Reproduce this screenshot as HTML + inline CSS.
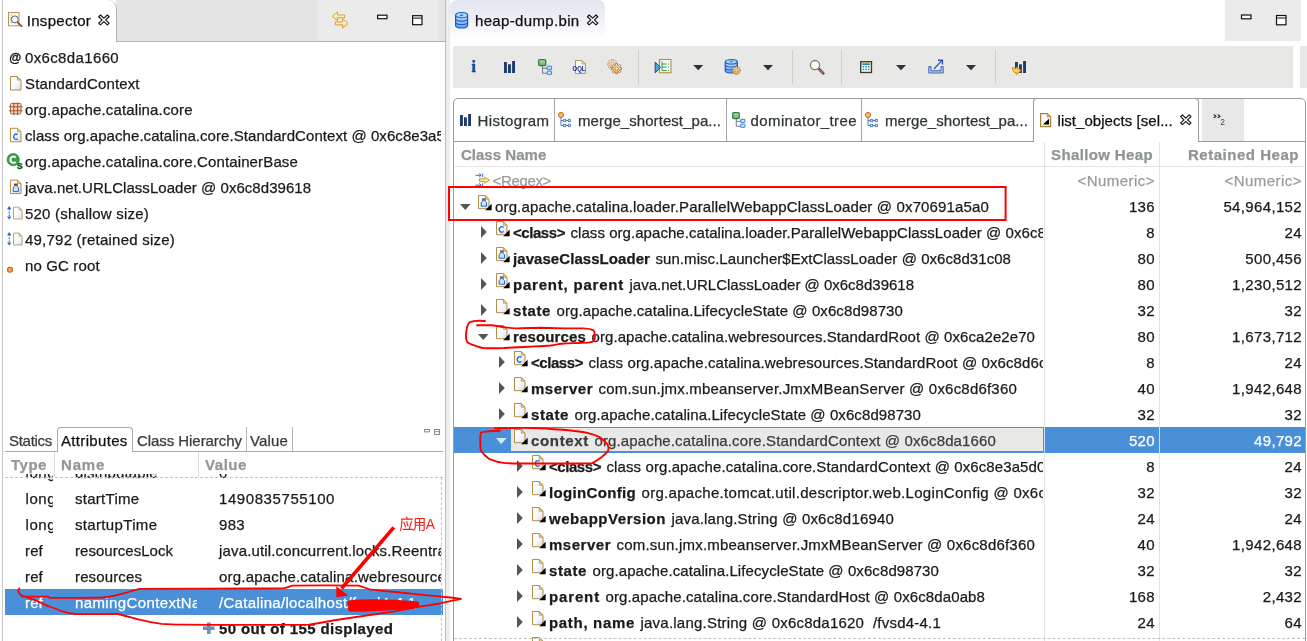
<!DOCTYPE html>
<html><head><meta charset="utf-8">
<style>
*{box-sizing:border-box;margin:0;padding:0}
html,body{width:1307px;height:641px;overflow:hidden;background:#fff}
body{font-family:"Liberation Sans",sans-serif;font-size:15px;color:#1a1a1a;position:relative}
.abs{position:absolute}
.t{position:absolute;margin-top:1px;white-space:pre;-webkit-text-stroke:.25px;line-height:26px;height:26px;letter-spacing:.14px}
.b{font-weight:700}
.g{color:#929696}
.num{position:absolute;margin-top:1px;white-space:pre;-webkit-text-stroke:.25px;line-height:26px;height:26px;text-align:right;letter-spacing:.35px}
svg{position:absolute;overflow:visible}
#left,#right,body>svg{will-change:transform}
</style></head><body>
<svg width="0" height="0" style="position:absolute"><defs>
<linearGradient id="pg" x1="0" y1="0" x2="1" y2="1"><stop offset="0" stop-color="#fff"/><stop offset=".55" stop-color="#f6f9fd"/><stop offset="1" stop-color="#cfdcf0"/></linearGradient>
<symbol id="pgbase" viewBox="0 0 16 16" overflow="visible"><path d="M.5.5H7.3L11,4.2V13.7H.5Z" fill="url(#pg)" stroke="#b08f45"/><path d="M7.3,.8V4.2H10.7Z" fill="#f1dfae" stroke="#b08f45" stroke-width=".8"/></symbol>
<symbol id="i-obj" viewBox="0 0 16 16" overflow="visible"><use href="#pgbase"/><path d="M13.6,8.8V15.2H7.2Z" fill="#000"/></symbol>
<symbol id="i-cls" viewBox="0 0 16 16" overflow="visible"><use href="#pgbase"/><path d="M7.6,6.5A2.5,2.8 0 1 0 7.6,10.4" stroke="#2468c0" stroke-width="1.3" fill="none"/><path d="M13.6,8.8V15.2H7.2Z" fill="#000"/></symbol>
<symbol id="i-cl" viewBox="0 0 16 16" overflow="visible"><use href="#pgbase"/><rect x="3.9" y="3.4" width="3.8" height="1.4" fill="#9c3a1c"/><path d="M4.4,5.3H7.2V6.4L8.5,7.6V11.2H3.1V7.6L4.4,6.4Z" fill="#cfe3fa" stroke="#2468c0" stroke-width="1"/><path d="M13.6,8.8V15.2H7.2Z" fill="#000"/></symbol>
</defs></svg>

<!-- ================= LEFT PANEL ================= -->
<div id="left" class="abs" style="left:0;top:0;width:450px;height:641px;background:#fff">
  <!-- outer gutter -->
  <div class="abs" style="left:0;top:0;width:3px;height:641px;background:#fff;border-right:1px solid #c6c6c6"></div>
  <!-- tab bar -->
  <div class="abs" style="left:116px;top:0;width:202px;height:41px;background:#e5e5e5"></div>
  <div class="abs" style="left:318px;top:0;width:127px;height:41px;background:#ebebeb"></div>
  <div class="abs" style="left:438px;top:0;width:7px;height:41px;background:#e4e4e4"></div>
  <div class="abs" style="left:116px;top:41px;width:329px;height:1px;background:#b4b4b4"></div>
  <div class="abs" style="left:3px;top:0;width:114px;height:42px;background:#fff;border-right:1px solid #b4b4b4;border-top-right-radius:9px"></div>
  <div class="t" id="insp" style="left:26.7px;top:7px;letter-spacing:.31px;color:#111">Inspector</div>

  <!-- inspector rows -->
  <div class="abs" style="left:4px;top:42px;width:437px;height:380px;overflow:hidden">
    <div class="t" id="l0" style="left:21px;top:2px;letter-spacing:.36px">0x6c8da1660</div>
    <div class="t" id="l1" style="left:21px;top:28px">StandardContext</div>
    <div class="t" id="l2" style="left:21px;top:54px">org.apache.catalina.core</div>
    <div class="t" id="l3" style="left:21px;top:80px;letter-spacing:.062px">class org.apache.catalina.core.StandardContext @ 0x6c8e3a5d0</div>
    <div class="t" id="l4" style="left:21px;top:106px">org.apache.catalina.core.ContainerBase</div>
    <div class="t" id="l5" style="left:21px;top:132px;letter-spacing:.04px">java.net.URLClassLoader @ 0x6c8d39618</div>
    <div class="t" id="l6" style="left:21px;top:158px;letter-spacing:.22px">520 (shallow size)</div>
    <div class="t" id="l7" style="left:21px;top:184px;letter-spacing:.22px">49,792 (retained size)</div>
    <div class="t" id="l8" style="left:21px;top:210px">no GC root</div>
  </div>
  <!-- bottom tabs -->
  <div class="abs" style="left:5px;top:451px;width:438px;height:1px;background:#a9a9a9"></div>
  <div class="abs" style="left:57px;top:427px;width:76px;height:25px;background:#fff;border:1px solid #a9a9a9;border-bottom:none;border-radius:4px 4px 0 0"></div>
  <div class="abs" style="left:246px;top:427px;width:1px;height:24px;background:#b5b5b5"></div>
  <div class="abs" style="left:292px;top:427px;width:1px;height:24px;background:#b5b5b5"></div>
  <div class="t" id="bt0" style="left:9px;top:427px;color:#3a3a3a;letter-spacing:-.29px">Statics</div>
  <div class="t" id="bt1" style="left:61px;top:427px;color:#111;letter-spacing:.33px">Attributes</div>
  <div class="t" id="bt2" style="left:137px;top:427px;color:#3a3a3a;letter-spacing:-.06px">Class Hierarchy</div>
  <div class="t" id="bt3" style="left:250px;top:427px;color:#3a3a3a">Value</div>
  <!-- table header -->
  <div class="abs" style="left:54px;top:452px;width:1px;height:25px;background:#dcdcdc"></div>
  <div class="abs" style="left:198px;top:452px;width:1px;height:25px;background:#dcdcdc"></div>
  <div class="t b g" id="th0" style="left:11px;top:451px;letter-spacing:.5px">Type</div>
  <div class="t b g" id="th1" style="left:61px;top:451px;letter-spacing:.8px">Name</div>
  <div class="t b g" id="th2" style="left:205px;top:451px;letter-spacing:.56px">Value</div>
  <!-- table body -->
  <div class="abs" style="left:5px;top:474px;width:438px;height:167px;overflow:hidden">
    <div class="abs" style="left:0;top:115px;width:438px;height:26px;background:#4a90d9"></div>
    <div class="abs" style="left:0;top:-15px;width:47.5px;height:26px;overflow:hidden"><div class="t" style="left:20.5px;top:0;letter-spacing:.55px">long</div></div>
    <div class="abs" style="left:50px;top:-15px;width:142px;height:26px;overflow:hidden"><div class="t" id="n0" style="left:20px;top:0">distributable</div></div>
    <div class="abs" style="left:194px;top:-15px;width:242px;height:26px;overflow:hidden"><div class="t" id="v0" style="left:20px;top:0">0</div></div>
    <div class="abs" style="left:0;top:11px;width:47.5px;height:26px;overflow:hidden"><div class="t" style="left:20.5px;top:0;letter-spacing:.55px">long</div></div>
    <div class="abs" style="left:50px;top:11px;width:142px;height:26px;overflow:hidden"><div class="t" id="n1" style="left:20px;top:0;letter-spacing:.28px">startTime</div></div>
    <div class="abs" style="left:194px;top:11px;width:242px;height:26px;overflow:hidden"><div class="t" id="v1" style="left:20px;top:0;letter-spacing:.58px">1490835755100</div></div>
    <div class="abs" style="left:0;top:37px;width:47.5px;height:26px;overflow:hidden"><div class="t" style="left:20.5px;top:0;letter-spacing:.55px">long</div></div>
    <div class="abs" style="left:50px;top:37px;width:142px;height:26px;overflow:hidden"><div class="t" id="n2" style="left:20px;top:0;letter-spacing:.34px">startupTime</div></div>
    <div class="abs" style="left:194px;top:37px;width:242px;height:26px;overflow:hidden"><div class="t" id="v2" style="left:20px;top:0;letter-spacing:.3px">983</div></div>
    <div class="abs" style="left:0;top:63px;width:48px;height:26px;overflow:hidden"><div class="t" style="left:20px;top:0">ref</div></div>
    <div class="abs" style="left:50px;top:63px;width:142px;height:26px;overflow:hidden"><div class="t" id="n3" style="left:20px;top:0;letter-spacing:.04px">resourcesLock</div></div>
    <div class="abs" style="left:194px;top:63px;width:242px;height:26px;overflow:hidden"><div class="t" id="v3" style="left:20px;top:0;letter-spacing:.153px">java.util.concurrent.locks.ReentrantLock</div></div>
    <div class="abs" style="left:0;top:89px;width:48px;height:26px;overflow:hidden"><div class="t" style="left:20px;top:0">ref</div></div>
    <div class="abs" style="left:50px;top:89px;width:142px;height:26px;overflow:hidden"><div class="t" id="n4" style="left:20px;top:0">resources</div></div>
    <div class="abs" style="left:194px;top:89px;width:242px;height:26px;overflow:hidden"><div class="t" id="v4" style="left:20px;top:0;letter-spacing:.195px">org.apache.catalina.webresources.StandardRoot</div></div>
    <div class="abs" style="left:0;top:115px;width:48px;height:26px;overflow:hidden"><div class="t" style="left:20px;top:0;color:#fff">ref</div></div>
    <div class="abs" style="left:50px;top:115px;width:142px;height:26px;overflow:hidden"><div class="t" id="n5" style="left:20px;top:0;color:#fff;letter-spacing:.38px">namingContextName</div></div>
    <div class="abs" style="left:194px;top:115px;width:242px;height:26px;overflow:hidden"><div class="t" id="v5" style="left:20px;top:0;color:#fff;letter-spacing:.31px">/Catalina/localhost/fvsd4-4.1</div></div>
    <div class="t b" id="disp" style="left:214px;top:141px;letter-spacing:.4px">50 out of 155 displayed</div>
  </div>
  <div class="abs" style="left:5px;top:477px;width:438px;height:0;border-top:1px dashed #c4c4c4"></div>
  <div class="abs" style="left:441px;top:477px;width:0;height:164px;border-left:1px dashed #c4c4c4"></div>
  <!-- sash -->
  <div class="abs" style="left:445px;top:0;width:5px;height:641px;background:#ededed;border-left:1px solid #bdbdbd"></div>
</div>

<!-- ================= RIGHT PANEL ================= -->
<!--RIGHT-START-->
<div id="right" class="abs" style="left:450px;top:0;width:857px;height:641px;background:#fff">
<div class="abs" style="left:0;top:0;width:155px;height:42px;border-radius:7px 7px 0 0;background:linear-gradient(#e2e5ee 0,#eceef4 40%,#fff 92%)"></div>
<div class="t" id="hd" style="left:25px;top:7px;color:#111;letter-spacing:0.34px">heap-dump.bin</div>
<div class="abs" style="left:775px;top:0;width:76px;height:41px;background:#ebebeb"></div>
<div class="abs" style="left:3px;top:46px;width:840px;height:42px;background:#e8e8e7"></div>
<div class="abs" style="left:850px;top:46px;width:7px;height:42px;background:#e8e8e7"></div>
<div class="abs" style="left:188px;top:50px;width:1px;height:34px;background:#cfcfcf"></div>
<div class="abs" style="left:342px;top:50px;width:1px;height:34px;background:#cfcfcf"></div>
<div class="abs" style="left:391px;top:50px;width:1px;height:34px;background:#cfcfcf"></div>
<div class="abs" style="left:545px;top:50px;width:1px;height:34px;background:#cfcfcf"></div>
<div class="abs" style="left:3px;top:98px;width:853px;height:560px;border:1px solid #9c9c9c;border-radius:5px 5px 0 0"></div>
<div class="abs" style="left:4px;top:141px;width:851px;height:1px;background:#9c9c9c"></div>
<div class="abs" style="left:104px;top:99px;width:1px;height:42px;background:#a8a8a8"></div>
<div class="abs" style="left:276px;top:99px;width:1px;height:42px;background:#a8a8a8"></div>
<div class="abs" style="left:411px;top:99px;width:1px;height:42px;background:#a8a8a8"></div>
<div class="abs" style="left:752px;top:99px;width:42px;height:42px;background:#e8e8e8"></div>
<div class="abs" style="left:583px;top:98px;width:166px;height:44px;background:#fff;border:1px solid #9c9c9c;border-bottom:none;border-radius:4px 4px 0 0"></div>
<div class="t" id="tb0" style="left:27.5px;top:107px;color:#2e3436;letter-spacing:0.405px">Histogram</div>
<div class="t" id="tb1" style="left:128px;top:107px;color:#2e3436;letter-spacing:0.062px">merge_shortest_pa...</div>
<div class="t" id="tb2" style="left:300.5px;top:107px;color:#2e3436;letter-spacing:0.4px">dominator_tree</div>
<div class="t" id="tb3" style="left:435px;top:107px;color:#2e3436;letter-spacing:0.062px">merge_shortest_pa...</div>
<div class="t" id="tb4" style="left:607.5px;top:107px;color:#111;letter-spacing:0.054px">list_objects [sel...</div>
<!--TOOLBAR-ICONS--><!-- coordinates here are absolute page coords minus 450 (panel origin) -->
<svg style="left:0;top:0" width="857" height="145">
<defs>
<linearGradient id="gy" x1="0" y1="0" x2="0" y2="1"><stop offset="0" stop-color="#fff8d0"/><stop offset="1" stop-color="#efb84a"/></linearGradient>
<linearGradient id="gb" x1="0" y1="0" x2="0" y2="1"><stop offset="0" stop-color="#bfe3fb"/><stop offset="1" stop-color="#5aa6e8"/></linearGradient>
<linearGradient id="gg" x1="0" y1="0" x2="0" y2="1"><stop offset="0" stop-color="#b5dba0"/><stop offset="1" stop-color="#6fb266"/></linearGradient>
<g id="bars3"><rect x="0" y="1" width="2.9" height="11" fill="#1b3b6f"/><rect x="4" y="3.3" width="2.9" height="8.7" fill="#1b3b6f"/><rect x="8.1" y="0" width="2.9" height="12" fill="#1b3b6f"/></g>
<g id="domtree"><path d="M4.5,7V14.5H9M4.5,9.5H9" fill="none" stroke="#6b7890" stroke-width="1"/><rect x=".7" y=".7" width="7" height="6" rx="1" fill="url(#gg)" stroke="#2c7d4f" stroke-width="1.3"/><rect x="9.2" y="7.4" width="4.4" height="3.2" rx=".3" fill="#c6ebff" stroke="#3b78d0" stroke-width="1"/><rect x="9.2" y="12.4" width="4.4" height="3.2" rx=".3" fill="#c6ebff" stroke="#3b78d0" stroke-width="1"/></g>
<g id="mergetree"><path d="M3.5,5.5V13.5H6M3.5,8.5H6M8,8.5H11M8,13.5H11" fill="none" stroke="#4a78c0" stroke-width="1"/><rect x="6" y="7.3" width="2.2" height="2.4" fill="#dbe9fb" stroke="#4a78c0" stroke-width=".8"/><rect x="10.8" y="7.3" width="2.2" height="2.4" fill="#dbe9fb" stroke="#4a78c0" stroke-width=".8"/><rect x="6" y="12.3" width="2.2" height="2.4" fill="#dbe9fb" stroke="#4a78c0" stroke-width=".8"/><rect x="10.8" y="12.3" width="2.2" height="2.4" fill="#dbe9fb" stroke="#4a78c0" stroke-width=".8"/><circle cx="3.5" cy="3" r="2.6" fill="#f8b866" stroke="#c9761a" stroke-width="1"/></g>
<g id="dd"><path d="M0,0H10L5,5.2Z" fill="#2e3436"/></g>
<g id="gear"><path d="M-0.89,-5.53L0.89,-5.53L1.09,-3.53L1.72,-3.27L3.28,-4.54L4.54,-3.28L3.27,-1.73L3.53,-1.09L5.53,-0.89L5.53,0.89L3.53,1.09L3.27,1.72L4.54,3.28L3.28,4.54L1.73,3.27L1.09,3.53L0.89,5.53L-0.89,5.53L-1.09,3.53L-1.72,3.27L-3.28,4.54L-4.54,3.28L-3.27,1.73L-3.53,1.09L-5.53,0.89L-5.53,-0.89L-3.53,-1.09L-3.27,-1.72L-4.54,-3.28L-3.28,-4.54L-1.73,-3.27L-1.09,-3.53Z" fill="url(#gy)" stroke="#b8672e" stroke-width=".9" stroke-linejoin="round"/><circle r="1.9" fill="#f0ece4" stroke="#b8672e" stroke-width=".9"/></g>
<g id="dbstack"><path d="M0,3V13.5A6,2.6 0 0 0 12,13.5V3" fill="url(#gb)" stroke="#1f55d0" stroke-width="1.2"/><path d="M0,6.5A6,2.6 0 0 0 12,6.5M0,10A6,2.6 0 0 0 12,10" fill="none" stroke="#1f55d0" stroke-width="1.1"/><ellipse cx="6" cy="3" rx="6" ry="2.7" fill="#a8d8f6" stroke="#1f55d0" stroke-width="1.2"/><ellipse cx="6" cy="3" rx="1.6" ry=".6" fill="#2450a8"/></g>
<g id="closex"><path d="M0.00,1.75L1.75,0.00L5.20,3.15L8.65,0.00L10.40,1.75L6.95,4.90L10.40,8.05L8.65,9.80L5.20,6.65L1.75,9.80L0.00,8.05L3.45,4.90Z" fill="#fff" stroke="#111" stroke-width="1.15" stroke-linejoin="round"/></g>
</defs>
<!-- top tab icon + close -->
<use href="#dbstack" transform="translate(5.6,12.2) scale(1,.98)"/>
<use href="#closex" transform="translate(137.4,15)"/>
<!-- min / max -->
<rect x="791.5" y="15" width="9.5" height="3.8" fill="#fff" stroke="#111" stroke-width="1.2"/>
<rect x="826.5" y="15.5" width="9.5" height="9.3" fill="#fff" stroke="#111" stroke-width="1.2"/><path d="M827,18H836" stroke="#111" stroke-width="1"/>
<!-- toolbar -->
<text x="21.6" y="71.6" font-family="Liberation Serif" font-weight="700" font-size="16" fill="#0b4a9c" stroke="#0b4a9c" stroke-width=".45">i</text>
<use href="#bars3" transform="translate(54,61)"/>
<use href="#domtree" transform="translate(88,59) scale(1,.98)"/>
<g transform="translate(124,60)"><path d="M1.5.5H8L11.5,4V13.5H1.5Z" fill="url(#pg)" stroke="#b09a60" stroke-width="1"/><path d="M8,.8V4H11.2Z" fill="#f1dfae" stroke="#b09a60" stroke-width=".8"/><text x="-1.5" y="10.6" font-family="Liberation Sans" font-weight="700" font-size="7" fill="#1c2a7c" textLength="13" lengthAdjust="spacingAndGlyphs">OQL</text></g>
<g opacity=".6"><use href="#gear" transform="translate(162.4,64.2) scale(.9)"/></g>
<use href="#gear" transform="translate(166.5,68.6) scale(.93)"/>
<g transform="translate(205,59)"><rect x="4.5" y=".5" width="11.5" height="13.2" fill="#f4f8f6" stroke="#b08f45" stroke-width="1.1"/><path d="M7,2.5V11.5M7,5H11.5M7,8H11.5M7,11.5H11.5" stroke="#2f9a55" stroke-width="1" fill="none"/><path d="M13,5H14M13,8H14M13,11.5H14" stroke="#2f9a55" stroke-width="1"/><path d="M.2,3.2V13.8L5.6,8.5Z" fill="#4fa7c9" stroke="#123a8c" stroke-width=".9"/></g>
<use href="#dd" transform="translate(243.2,65)"/>
<use href="#dbstack" transform="translate(275.3,59.2) scale(1,.86)"/>
<use href="#gear" transform="translate(286.3,70.4) scale(.76)"/>
<use href="#dd" transform="translate(313,65)"/>
<g><path d="M369.5,69.5L373.3,73.3" stroke="#1b2d6b" stroke-width="2.6" stroke-linecap="round"/><path d="M369.7,69.7L373,73" stroke="#d0693c" stroke-width="1.6" stroke-linecap="round"/><circle cx="365" cy="65.1" r="4.6" fill="#fffce8" stroke="#7d7d7d" stroke-width="1.3"/></g>
<g transform="translate(410,61)"><rect x=".7" y=".7" width="10.8" height="10.8" fill="#efe9b4" stroke="#3c3630" stroke-width="1.3"/><rect x="2" y="2" width="8.2" height="8.2" fill="#fff"/><rect x="2.2" y="2.3" width="7.8" height="1.8" fill="#2b86b0"/><path d="M2.6,5.8H4.2M5.3,5.8H6.9M8,5.8H9.6M2.6,8.4H4.2M5.3,8.4H6.9M8,8.4H9.6" stroke="#2b86b0" stroke-width="1.5"/></g>
<use href="#dd" transform="translate(446,65)"/>
<g transform="translate(478,59)"><path d="M.8,7.5V14H15.2V7.5H13V11.8H3V7.5Z" fill="#b8c8e8" stroke="#3d66b8" stroke-width="1"/><path d="M6,10L13.5,1.8" stroke="#2b4fb0" stroke-width="1.2"/><path d="M10,1.2H14.4V5.6" fill="none" stroke="#2b4fb0" stroke-width="1.4"/></g>
<use href="#dd" transform="translate(516,65)"/>
<use href="#bars3" transform="translate(565,61)"/>
<path d="M562.3,67.5L566.2,68.8V67L571,70.5L566.2,74.6V72.6C564,72.8 562.5,71 562.3,67.5Z" fill="#f7cf58" stroke="#c98a1c" stroke-width=".9" stroke-linejoin="round"/>
<!-- inner tab icons -->
<use href="#bars3" transform="translate(10,114)"/>
<use href="#mergetree" transform="translate(107.5,112)"/>
<use href="#domtree" transform="translate(282,112) scale(.95,.98)"/>
<use href="#mergetree" transform="translate(414.5,112)"/>
<g transform="translate(590,113)"><path d="M.6.6H7.3L10.6,3.9V13.6H.6Z" fill="url(#pg)" stroke="#a88430" stroke-width="1.2"/><path d="M7.3,.9V3.9H10.3Z" fill="#efd28c" stroke="#a88430" stroke-width=".8"/><path d="M9,5.8V11.6H2.9Z" fill="#000"/></g>
<use href="#closex" transform="translate(730.6,114.9)"/>
<!-- >>2 -->
<path d="M763,114.4H764.8L766.8,116.2L764.8,118H763L765,116.2ZM767,114.4H768.8L770.8,116.2L768.8,118H767L769,116.2Z" fill="#222"/>
<text x="770.3" y="125" font-family="Liberation Sans" font-size="8.5" fill="#444">2</text>
<!-- regex icon placed in separate svg below -->
</svg>
<svg style="left:23.7px;top:172.6px" width="17" height="14" viewBox="0 0 16.2 15.2"><path d="M.5,2.5H6.5M4.5,.6L6.6,2.5L4.5,4.4M8.3,.5V4.5" stroke="#2a5fa8" stroke-width="1" fill="none"/><path d="M.5,13.2H6.5M4.5,11.3L6.6,13.2L4.5,15.1M8.3,11.2V15" stroke="#2a5fa8" stroke-width="1" fill="none"/><path d="M4.6,6.4H10.6V4.6L15.6,7.8L10.6,11V9.2H4.6Z" fill="#fff1b8" stroke="#c48a1c" stroke-width="1" stroke-linejoin="round"/></svg>
<!--/TOOLBAR-ICONS-->
<div class="abs" style="left:4px;top:166px;width:851px;height:1px;background:#e4e4e4"></div>
<div class="abs" style="left:594px;top:142px;width:1px;height:499px;background:#e2e2e2"></div>
<div class="abs" style="left:709px;top:142px;width:1px;height:499px;background:#e2e2e2"></div>
<div class="t b" id="h0" style="left:10.9px;top:141px;color:#8f9494;letter-spacing:0.034px">Class Name</div>
<div class="t b" id="h1" style="left:601px;top:141px;color:#8f9494;letter-spacing:0.372px">Shallow Heap</div>
<div class="t b" id="h2" style="left:738px;top:141px;color:#8f9494;letter-spacing:0.523px">Retained Heap</div>
<div class="t" id="rg" style="left:42.60000000000002px;top:167px;color:#9b9b9b;letter-spacing:-0.356px">&lt;Regex&gt;</div>
<div class="num" style="left:605px;width:100px;top:167px;color:#9b9b9b"><span id="nm1" style="letter-spacing:0.46px">&lt;Numeric&gt;</span></div>
<div class="num" style="left:752px;width:100px;top:167px;color:#9b9b9b"><span id="nm2" style="letter-spacing:0.46px">&lt;Numeric&gt;</span></div>
<svg style="left:10.300000000000011px;top:203.5px" width="11" height="6"><path d="M0,0H10.6L5.3,5.9Z" fill="#555"/></svg>
<svg style="left:28px;top:195px" width="16" height="16"><use href="#i-cl"/></svg>
<div class="abs" style="left:45px;top:193px;width:548px;height:26px;overflow:hidden"><div class="t" style="left:0;top:0;color:#1a1a1a"><span id="rt0" style="letter-spacing:0.145px">org.apache.catalina.loader.ParallelWebappClassLoader @ 0x70691a5a0</span></div></div>
<div class="num" style="left:605px;width:100px;top:193px;color:#1a1a1a">136</div>
<div class="num" style="left:752px;width:100px;top:193px;color:#1a1a1a">54,964,152</div>
<svg style="left:30.5px;top:226.2px" width="6" height="12"><path d="M0,0V12L5.8,6Z" fill="#555"/></svg>
<svg style="left:46px;top:221px" width="16" height="16"><use href="#i-cls"/></svg>
<div class="abs" style="left:63px;top:219px;width:530px;height:26px;overflow:hidden"><div class="t" style="left:0;top:0;color:#1a1a1a"><span class="b" id="rb1" style="letter-spacing:-0.438px">&lt;class&gt;</span><span id="rt1" style="position:absolute;left:57.5px;letter-spacing:0.053px">class org.apache.catalina.loader.ParallelWebappClassLoader @ 0x6c8e3f9a8</span></div></div>
<div class="num" style="left:605px;width:100px;top:219px;color:#1a1a1a">8</div>
<div class="num" style="left:752px;width:100px;top:219px;color:#1a1a1a">24</div>
<svg style="left:30.5px;top:252.2px" width="6" height="12"><path d="M0,0V12L5.8,6Z" fill="#555"/></svg>
<svg style="left:46px;top:247px" width="16" height="16"><use href="#i-cl"/></svg>
<div class="abs" style="left:63px;top:245px;width:530px;height:26px;overflow:hidden"><div class="t" style="left:0;top:0;color:#1a1a1a"><span class="b" id="rb2" style="letter-spacing:0.063px">javaseClassLoader</span><span id="rt2" style="position:absolute;left:142.5px;letter-spacing:0.056px">sun.misc.Launcher$ExtClassLoader @ 0x6c8d31c08</span></div></div>
<div class="num" style="left:605px;width:100px;top:245px;color:#1a1a1a">80</div>
<div class="num" style="left:752px;width:100px;top:245px;color:#1a1a1a">500,456</div>
<svg style="left:30.5px;top:278.2px" width="6" height="12"><path d="M0,0V12L5.8,6Z" fill="#555"/></svg>
<svg style="left:46px;top:273px" width="16" height="16"><use href="#i-cl"/></svg>
<div class="abs" style="left:63px;top:271px;width:530px;height:26px;overflow:hidden"><div class="t" style="left:0;top:0;color:#1a1a1a"><span class="b" id="rb3" style="letter-spacing:0.783px">parent, parent</span><span id="rt3" style="position:absolute;left:116.5px;letter-spacing:-0.002px">java.net.URLClassLoader @ 0x6c8d39618</span></div></div>
<div class="num" style="left:605px;width:100px;top:271px;color:#1a1a1a">80</div>
<div class="num" style="left:752px;width:100px;top:271px;color:#1a1a1a">1,230,512</div>
<svg style="left:30.5px;top:304.2px" width="6" height="12"><path d="M0,0V12L5.8,6Z" fill="#555"/></svg>
<svg style="left:46px;top:299px" width="16" height="16"><use href="#i-obj"/></svg>
<div class="abs" style="left:63px;top:297px;width:530px;height:26px;overflow:hidden"><div class="t" style="left:0;top:0;color:#1a1a1a"><span class="b" id="rb4" style="letter-spacing:0.594px">state</span><span id="rt4" style="position:absolute;left:43.5px;letter-spacing:0.091px">org.apache.catalina.LifecycleState @ 0x6c8d98730</span></div></div>
<div class="num" style="left:605px;width:100px;top:297px;color:#1a1a1a">32</div>
<div class="num" style="left:752px;width:100px;top:297px;color:#1a1a1a">32</div>
<svg style="left:27.80000000000001px;top:333.5px" width="11" height="6"><path d="M0,0H10.6L5.3,5.9Z" fill="#555"/></svg>
<svg style="left:46px;top:325px" width="16" height="16"><use href="#i-obj"/></svg>
<div class="abs" style="left:63px;top:323px;width:530px;height:26px;overflow:hidden"><div class="t" style="left:0;top:0;color:#1a1a1a"><span class="b" id="rb5" style="letter-spacing:0.142px">resources</span><span id="rt5" style="position:absolute;left:78.5px;letter-spacing:0.079px">org.apache.catalina.webresources.StandardRoot @ 0x6ca2e2e70</span></div></div>
<div class="num" style="left:605px;width:100px;top:323px;color:#1a1a1a">80</div>
<div class="num" style="left:752px;width:100px;top:323px;color:#1a1a1a">1,673,712</div>
<svg style="left:48.5px;top:356.2px" width="6" height="12"><path d="M0,0V12L5.8,6Z" fill="#555"/></svg>
<svg style="left:64px;top:351px" width="16" height="16"><use href="#i-cls"/></svg>
<div class="abs" style="left:81px;top:349px;width:512px;height:26px;overflow:hidden"><div class="t" style="left:0;top:0;color:#1a1a1a"><span class="b" id="rb6" style="letter-spacing:-0.438px">&lt;class&gt;</span><span id="rt6" style="position:absolute;left:57.5px;letter-spacing:0.109px">class org.apache.catalina.webresources.StandardRoot @ 0x6c8d6c0a8</span></div></div>
<div class="num" style="left:605px;width:100px;top:349px;color:#1a1a1a">8</div>
<div class="num" style="left:752px;width:100px;top:349px;color:#1a1a1a">24</div>
<svg style="left:48.5px;top:382.2px" width="6" height="12"><path d="M0,0V12L5.8,6Z" fill="#555"/></svg>
<svg style="left:64px;top:377px" width="16" height="16"><use href="#i-obj"/></svg>
<div class="abs" style="left:81px;top:375px;width:512px;height:26px;overflow:hidden"><div class="t" style="left:0;top:0;color:#1a1a1a"><span class="b" id="rb7" style="letter-spacing:0.516px">mserver</span><span id="rt7" style="position:absolute;left:67.5px;letter-spacing:0.204px">com.sun.jmx.mbeanserver.JmxMBeanServer @ 0x6c8d6f360</span></div></div>
<div class="num" style="left:605px;width:100px;top:375px;color:#1a1a1a">40</div>
<div class="num" style="left:752px;width:100px;top:375px;color:#1a1a1a">1,942,648</div>
<svg style="left:48.5px;top:408.2px" width="6" height="12"><path d="M0,0V12L5.8,6Z" fill="#555"/></svg>
<svg style="left:64px;top:403px" width="16" height="16"><use href="#i-obj"/></svg>
<div class="abs" style="left:81px;top:401px;width:512px;height:26px;overflow:hidden"><div class="t" style="left:0;top:0;color:#1a1a1a"><span class="b" id="rb8" style="letter-spacing:0.594px">state</span><span id="rt8" style="position:absolute;left:43.5px;letter-spacing:0.091px">org.apache.catalina.LifecycleState @ 0x6c8d98730</span></div></div>
<div class="num" style="left:605px;width:100px;top:401px;color:#1a1a1a">32</div>
<div class="num" style="left:752px;width:100px;top:401px;color:#1a1a1a">32</div>
<div class="abs" style="left:4px;top:427px;width:851px;height:26px;background:#4a90d9"></div>
<div class="abs" style="left:60px;top:427px;width:534px;height:26px;background:#e8e8e7;border:1px solid #4a90d9;border-bottom-width:2px"></div>
<div class="abs" style="left:594px;top:427px;width:1px;height:26px;background:#cfe0f4"></div>
<div class="abs" style="left:709px;top:427px;width:1px;height:26px;background:#cfe0f4"></div>
<svg style="left:45.80000000000001px;top:437.5px" width="11" height="6"><path d="M0,0H10.6L5.3,5.9Z" fill="#d6e6f8"/></svg>
<svg style="left:64px;top:429px" width="16" height="16"><use href="#i-obj"/></svg>
<div class="abs" style="left:81px;top:427px;width:512px;height:26px;overflow:hidden"><div class="t" style="left:0;top:0;color:#3c3c3c"><span class="b" id="rb9" style="letter-spacing:0.665px">context</span><span id="rt9" style="position:absolute;left:63.5px;letter-spacing:0.126px">org.apache.catalina.core.StandardContext @ 0x6c8da1660</span></div></div>
<div class="num" style="left:605px;width:100px;top:427px;color:#fff">520</div>
<div class="num" style="left:752px;width:100px;top:427px;color:#fff">49,792</div>
<svg style="left:66.5px;top:460.2px" width="6" height="12"><path d="M0,0V12L5.8,6Z" fill="#555"/></svg>
<svg style="left:82px;top:455px" width="16" height="16"><use href="#i-cls"/></svg>
<div class="abs" style="left:99px;top:453px;width:494px;height:26px;overflow:hidden"><div class="t" style="left:0;top:0;color:#1a1a1a"><span class="b" id="rb10" style="letter-spacing:-0.438px">&lt;class&gt;</span><span id="rt10" style="position:absolute;left:57.5px;letter-spacing:0.099px">class org.apache.catalina.core.StandardContext @ 0x6c8e3a5d0</span></div></div>
<div class="num" style="left:605px;width:100px;top:453px;color:#1a1a1a">8</div>
<div class="num" style="left:752px;width:100px;top:453px;color:#1a1a1a">24</div>
<svg style="left:66.5px;top:486.2px" width="6" height="12"><path d="M0,0V12L5.8,6Z" fill="#555"/></svg>
<svg style="left:82px;top:481px" width="16" height="16"><use href="#i-obj"/></svg>
<div class="abs" style="left:99px;top:479px;width:494px;height:26px;overflow:hidden"><div class="t" style="left:0;top:0;color:#1a1a1a"><span class="b" id="rb11" style="letter-spacing:0.335px">loginConfig</span><span id="rt11" style="position:absolute;left:92.5px;letter-spacing:0.301px">org.apache.tomcat.util.descriptor.web.LoginConfig @ 0x6c8da2d18</span></div></div>
<div class="num" style="left:605px;width:100px;top:479px;color:#1a1a1a">32</div>
<div class="num" style="left:752px;width:100px;top:479px;color:#1a1a1a">32</div>
<svg style="left:66.5px;top:512.2px" width="6" height="12"><path d="M0,0V12L5.8,6Z" fill="#555"/></svg>
<svg style="left:82px;top:507px" width="16" height="16"><use href="#i-obj"/></svg>
<div class="abs" style="left:99px;top:505px;width:494px;height:26px;overflow:hidden"><div class="t" style="left:0;top:0;color:#1a1a1a"><span class="b" id="rb12" style="letter-spacing:0.535px">webappVersion</span><span id="rt12" style="position:absolute;left:122.5px;letter-spacing:0.182px">java.lang.String @ 0x6c8d16940</span></div></div>
<div class="num" style="left:605px;width:100px;top:505px;color:#1a1a1a">24</div>
<div class="num" style="left:752px;width:100px;top:505px;color:#1a1a1a">24</div>
<svg style="left:66.5px;top:538.2px" width="6" height="12"><path d="M0,0V12L5.8,6Z" fill="#555"/></svg>
<svg style="left:82px;top:533px" width="16" height="16"><use href="#i-obj"/></svg>
<div class="abs" style="left:99px;top:531px;width:494px;height:26px;overflow:hidden"><div class="t" style="left:0;top:0;color:#1a1a1a"><span class="b" id="rb13" style="letter-spacing:0.516px">mserver</span><span id="rt13" style="position:absolute;left:67.5px;letter-spacing:0.204px">com.sun.jmx.mbeanserver.JmxMBeanServer @ 0x6c8d6f360</span></div></div>
<div class="num" style="left:605px;width:100px;top:531px;color:#1a1a1a">40</div>
<div class="num" style="left:752px;width:100px;top:531px;color:#1a1a1a">1,942,648</div>
<svg style="left:66.5px;top:564.2px" width="6" height="12"><path d="M0,0V12L5.8,6Z" fill="#555"/></svg>
<svg style="left:82px;top:559px" width="16" height="16"><use href="#i-obj"/></svg>
<div class="abs" style="left:99px;top:557px;width:494px;height:26px;overflow:hidden"><div class="t" style="left:0;top:0;color:#1a1a1a"><span class="b" id="rb14" style="letter-spacing:0.594px">state</span><span id="rt14" style="position:absolute;left:43.5px;letter-spacing:0.091px">org.apache.catalina.LifecycleState @ 0x6c8d98730</span></div></div>
<div class="num" style="left:605px;width:100px;top:557px;color:#1a1a1a">32</div>
<div class="num" style="left:752px;width:100px;top:557px;color:#1a1a1a">32</div>
<svg style="left:66.5px;top:590.2px" width="6" height="12"><path d="M0,0V12L5.8,6Z" fill="#555"/></svg>
<svg style="left:82px;top:585px" width="16" height="16"><use href="#i-obj"/></svg>
<div class="abs" style="left:99px;top:583px;width:494px;height:26px;overflow:hidden"><div class="t" style="left:0;top:0;color:#1a1a1a"><span class="b" id="rb15" style="letter-spacing:0.859px">parent</span><span id="rt15" style="position:absolute;left:56.5px;letter-spacing:0.112px">org.apache.catalina.core.StandardHost @ 0x6c8da0ab8</span></div></div>
<div class="num" style="left:605px;width:100px;top:583px;color:#1a1a1a">168</div>
<div class="num" style="left:752px;width:100px;top:583px;color:#1a1a1a">2,432</div>
<svg style="left:66.5px;top:616.2px" width="6" height="12"><path d="M0,0V12L5.8,6Z" fill="#555"/></svg>
<svg style="left:82px;top:611px" width="16" height="16"><use href="#i-obj"/></svg>
<div class="abs" style="left:99px;top:609px;width:494px;height:26px;overflow:hidden"><div class="t" style="left:0;top:0;color:#1a1a1a"><span class="b" id="rb16" style="letter-spacing:0.681px">path, name</span><span id="rt16" style="position:absolute;left:91.5px;letter-spacing:0.22px">java.lang.String @ 0x6c8da1620  /fvsd4-4.1</span></div></div>
<div class="num" style="left:605px;width:100px;top:609px;color:#1a1a1a">24</div>
<div class="num" style="left:752px;width:100px;top:609px;color:#1a1a1a">64</div>
<svg style="left:66.5px;top:642.2px" width="6" height="12"><path d="M0,0V12L5.8,6Z" fill="#555"/></svg>
<svg style="left:82px;top:637px" width="16" height="16"><use href="#i-obj"/></svg>
<div class="abs" style="left:4px;top:638px;width:851px;height:0;border-top:1px dashed #c2c2c2"></div>
<!--RIGHT-EXTRA-->
</div>
<!--RIGHT-END-->

<!--OVERLAY-->
<svg style="left:0;top:0;z-index:50;pointer-events:none" width="1307" height="641">
<defs>
<linearGradient id="gy2" x1="0" y1="0" x2="0" y2="1"><stop offset="0" stop-color="#fffdf0"/><stop offset="1" stop-color="#f8dc8a"/></linearGradient>
<g id="pg11"><path d="M.5.5H7.5L11,4V14H.5Z" fill="url(#pg)" stroke="#b08f45"/><path d="M7.5,.8V4H10.7Z" fill="#f1dfae" stroke="#b08f45" stroke-width=".8"/></g>
<g id="szic"><path d="M2.2,3V11.4" stroke="#2a66c8" stroke-width="1.1" stroke-dasharray="1.7 1.2"/><path d="M0,3.6L2.2,.4L4.4,3.6ZM0,10.8L2.2,14L4.4,10.8Z" fill="#2a66c8"/><path d="M6.5,1.5H12L15.2,4.6V13.4H6.5Z" fill="url(#pg)" stroke="#bba676" stroke-width="1"/><path d="M12,1.8V4.6H14.9Z" fill="#f1dfae" stroke="#bba676" stroke-width=".7"/></g>
</defs>
<!-- Inspector tab icon -->
<g transform="translate(8,12)"><rect x=".5" y=".5" width="10.5" height="13.3" fill="#fbfbf4" stroke="#b89a4c"/><path d="M2,3H5M2,5.5H4M2,8H3.5M2,10.5H4" stroke="#b9c8e6" stroke-width="1"/><path d="M9.6,10.4L13.6,14.4" stroke="#8a4a34" stroke-width="1.7" stroke-linecap="round"/><circle cx="6.8" cy="7.4" r="3.5" fill="#eef4fb" fill-opacity=".9" stroke="#5a6270" stroke-width="1"/></g>
<use href="#closex" transform="translate(98.7,15)"/>
<!-- sync arrows -->
<path d="M332.2,16.4L337.4,12.1V15H344.7V17.8H337.4V20.7Z" fill="url(#gy2)" stroke="#cf9526" stroke-width=".9" stroke-linejoin="round"/>
<path d="M348,23.4L342.6,18.9V22H335.2V24.9H342.6V28Z" fill="url(#gy2)" stroke="#cf9526" stroke-width=".9" stroke-linejoin="round"/>
<rect x="377.6" y="15.2" width="9.4" height="3.5" fill="#fff" stroke="#111" stroke-width="1.2"/>
<rect x="412.6" y="15.7" width="9.4" height="9" fill="#fff" stroke="#111" stroke-width="1.2"/><path d="M413,18.1H422" stroke="#111" stroke-width="1"/>
<!-- rows -->
<text x="9.2" y="61.6" font-family="Liberation Sans" font-weight="700" font-size="12.3" fill="#111" stroke="#111" stroke-width=".3">@</text>
<use href="#pg11" transform="translate(10,76)"/>
<g transform="translate(9,102.4)"><rect x="1.5" y="1" width="10.5" height="10.5" rx="1" fill="#f6d9b8" stroke="#b0603a" stroke-width="1"/><path d="M0,4.3H13.5M0,8.3H13.5M4.9,0V12.6M8.6,0V12.6" stroke="#a8552f" stroke-width="1.1" fill="none"/></g>
<g transform="translate(10,127.8)"><use href="#pg11"/><path d="M7.6,6.9A2.3,2.7 0 1 0 7.6,10.9" stroke="#2468c0" stroke-width="1.3" fill="none"/></g>
<g><circle cx="13.2" cy="159.6" r="6.1" fill="#36a046" stroke="#2a8a3a" stroke-width=".8"/><path d="M15.8,157.5A3.1,3.2 0 1 0 15.8,161.8" stroke="#fff" stroke-width="2" fill="none"/><text x="16.8" y="168.6" font-family="Liberation Sans" font-weight="700" font-size="11" fill="#0a5a18" stroke="#0a5a18" stroke-width=".3">s</text></g>
<g transform="translate(10,179.6)"><use href="#pg11"/><rect x="4" y="4" width="3.8" height="1.4" fill="#9c3a1c"/><path d="M4.5,5.9H7.3V7L8.6,8.2V12H3.2V8.2L4.5,7Z" fill="#cfe3fa" stroke="#2468c0" stroke-width="1"/></g>
<use href="#szic" transform="translate(7,205.6)"/>
<use href="#szic" transform="translate(7,231.6)"/>
<circle cx="10" cy="269.7" r="2.5" fill="#f6a648" stroke="#c46a12" stroke-width="1.1"/>
<!-- mini min/max -->
<rect x="424.5" y="429.5" width="5" height="2.4" fill="none" stroke="#8e8e88" stroke-width="1"/>
<rect x="434.5" y="429.5" width="5" height="5" fill="none" stroke="#8e8e88" stroke-width="1"/><path d="M434.5,431.7H439.5" stroke="#8e8e88" stroke-width="1"/>
<!-- plus icon -->
<path d="M207,622.4H210.6V626.4H214.6V630H210.6V634H207V630H203V626.4H207Z" fill="#6f8fb3"/>

<!-- ===== red annotations ===== -->
<g fill="none" stroke="#ff0000" stroke-linecap="round" stroke-linejoin="round">
<rect x="449" y="187" width="556.6" height="33" stroke-width="2" stroke-linejoin="miter"/>
<path d="M485,321C480,320.6 473,320.8 469.7,322.2C466.8,324 466.4,330 466,334.5C465.9,338 466.2,340.5 467.2,341.8C469,343.6 472,344.6 474.6,345.5C478,346.8 480.5,347.8 483.2,348C490,348.3 497,348.2 504,348C512,347.6 520,347.2 528.4,346.7C536,346.3 543,346 550.5,345.5C555,345 558,344.2 561.5,343.7C567,343.2 572,343.2 577.4,343C582,342.9 586,342.8 589.6,342.4C592,342 593.4,341.6 593.9,340.6C594.8,338.6 595,336.5 594.8,334.5C594.6,332.6 594.3,331 593.3,330.2C590.5,329 587,328.6 583.5,328.4C577,328.3 571,328.4 565.2,328.4C557,328.3 549,327.9 540.7,327.7C532.5,327.7 524,328.5 516.2,328.4C512,328.2 508,327.7 504,327.1C500,326.5 496,325.6 491.7,325.3C486.5,325.1 482,325.3 477,325.3" stroke-width="1.9"/>
<path d="M499.9,430.8C496.5,430.8 493,431 489.5,431.3C486.5,431.6 482.6,431.8 480.9,432.9C480,435.8 480.2,439 480.3,442C480.3,445 480.2,448 480.9,450.6C483,454 486,456.8 489.5,459.2C494.5,461.4 500,462.6 505.4,463.1C516,463.6 527,463.5 538.4,463.5C550,463.5 563,463.6 575.2,463.5C581,463.4 587,463.6 592.3,463.1C595.8,461.2 599,459 602.1,456.7C604.4,454.8 606.6,452.8 608.2,450.6C608.8,448.6 608.4,446.4 607.6,444.5C605.6,441.6 602.8,439.2 599.6,437.1C595.8,435.3 591.6,434 587.4,432.9C579.5,431.5 571,430.6 562.9,429.8C552.5,429 542.5,428.3 532.3,428C526,427.8 520,427.9 514,428C507.5,428 501,428.1 495,428.3" stroke-width="1.9"/>
<path d="M19.3,588.4C18.6,589.6 18.2,590.8 18.4,592C19.2,593.6 20.4,594.8 22,595.7C25.5,597 29.4,598.2 33,599.4C38,601.4 42.8,603.7 47.7,605.8C52.6,607.7 57.4,609.6 62.4,611.3C66.6,612.6 71,613.7 75.3,614C89,614.2 103,614 117.5,614C125,615.6 132,617.7 139.5,619.6C146.8,621.3 154,622.9 161.6,623.8C168.8,624.4 176,624.6 183.6,624.7C225,625.1 267,625 309,624.7C317,623.6 325,622 332.8,620.5C345,618.7 357.4,616.8 369.6,615C378.2,613.8 386.8,612.6 395.3,611.3C403.4,609.9 411.2,608.2 419.1,606.7C425.2,605.7 431.4,605 437.5,604C441.8,603.2 446,602.2 450.3,601.2C453.8,600.4 457.4,599.6 461,598.8C457.4,598.4 453.8,598 450.3,597.5C441,596.6 432,595.7 422.8,594.8C413.6,593.9 404.4,593 395.3,592C386.6,591.2 378,590.4 369.6,589.3C365.8,588.2 362.2,586.6 358.5,585.6C336.5,585.4 314.4,585.4 292.4,585.6C289.4,586.4 286.4,587.8 283.2,588.4C235,589 187,588.9 139.5,588.9C135.8,589.8 132.2,591 128.5,592C124.8,593 121.2,594 117.5,594.8C112.6,595.9 107.8,596.9 102.8,597.5C85,598 67,597.9 49.6,597.9L48.7,596.6H22" stroke-width="1.8"/>
<path d="M393.8,527.3L341.5,588.5" stroke-width="3.6" stroke-linecap="butt"/>
<path d="M350.5,603.6C370,601.6 392,602.4 416,604.6" stroke-width="6.5"/>
<path d="M351,608.4C372,608.8 392,606.6 412,605.8" stroke-width="6.5"/>
</g>
<path d="M336.3,586.3L348.2,595.4L336.4,597.2Z" fill="#ff0000"/>
<!-- 应用A -->
<g transform="translate(395,512)" fill="none" stroke="#ff1a1a" stroke-width="1.1" stroke-linecap="round">
<path d="M11.3,5.2L12.3,6.2M6.6,7.1H17.4M6.9,7.1C6.9,11.5 6.6,15.4 5.5,18.4M8.8,10.1L10.5,15M11.6,9.4L12.9,13.9M16.5,9.4L14.4,16.5M8.1,17.4H17.6"/>
<path d="M20.3,6.5H29.2V17.6C29.2,18.4 28.4,18.6 27,18.5M20.3,6.5V14.6C20.2,16.4 19.6,17.6 18.7,18.5M24.6,6.5V18.7M20.3,10.5H29.2M20.3,13.3H29.2"/>
</g>
<text x="425.8" y="529" font-family="Liberation Sans" font-size="13.8" fill="#ff1a1a">A</text>
</svg>
<!--/OVERLAY-->

</body></html>
